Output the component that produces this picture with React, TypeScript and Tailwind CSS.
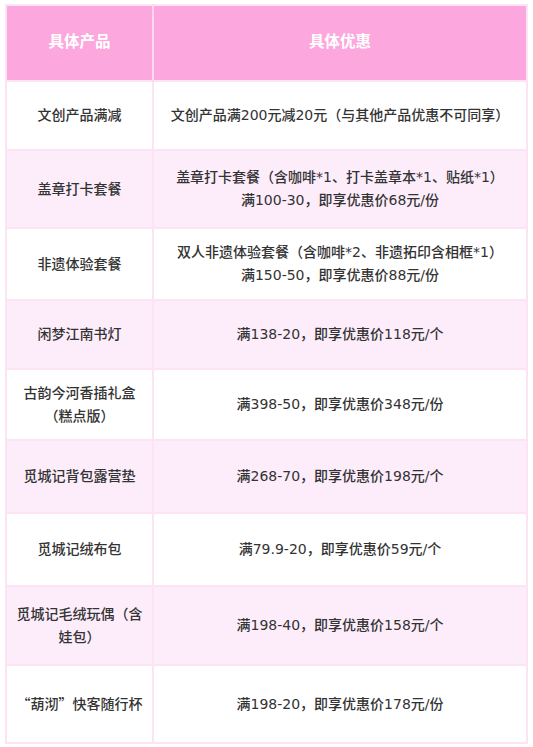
import type { ReactNode } from 'react';

const cjk = "font-['Noto_Sans_CJK_SC',sans-serif]";

const rows: { name: ReactNode[]; deal: string[]; h: string }[] = [
  { name: ['文创产品满减'], deal: ['文创产品满200元减20元（与其他产品优惠不可同享）'], h: 'h-[69px]' },
  { name: ['盖章打卡套餐'], deal: ['盖章打卡套餐（含咖啡*1、打卡盖章本*1、贴纸*1）', '满100-30，即享优惠价68元/份'], h: 'h-[78px]' },
  { name: ['非遗体验套餐'], deal: ['双人非遗体验套餐（含咖啡*2、非遗拓印含相框*1）', '满150-50，即享优惠价88元/份'], h: 'h-[72px]' },
  { name: ['闲梦江南书灯'], deal: ['满138-20，即享优惠价118元/个'], h: 'h-[69px]' },
  { name: ['古韵今河香插礼盒', '（糕点版）'], deal: ['满398-50，即享优惠价348元/份'], h: 'h-[71px]' },
  { name: ['觅城记背包露营垫'], deal: ['满268-70，即享优惠价198元/个'], h: 'h-[73px]' },
  { name: ['觅城记绒布包'], deal: ['满79.9-20，即享优惠价59元/个'], h: 'h-[73px]' },
  { name: ['觅城记毛绒玩偶（含', '娃包）'], deal: ['满198-40，即享优惠价158元/个'], h: 'h-[79px]' },
  {
    name: [
      <span className={cjk}>“葫沏”快客随行杯</span>,
    ],
    deal: ['满198-20，即享优惠价178元/份'],
    h: 'h-[78px]',
  },
];

export default function App() {
  return (
    <div className="min-h-screen bg-white pt-[4px] px-[5px] font-['DejaVu_Sans','Noto_Sans_CJK_SC',sans-serif]">
      <table className="w-[523px] border-collapse border-2 border-[#fde4f5] text-center">
        <thead>
          <tr className="h-[76px] bg-[#fca7dd] text-white text-[15.5px] font-bold">
            <th className="w-[147px] border-r-2 border-[#fdd6ef]">具体产品</th>
            <th>具体优惠</th>
          </tr>
        </thead>
        <tbody className="text-[14px] font-medium leading-[23px] text-[#333333]">
          {rows.map((r, i) => (
            <tr key={i} className={`${r.h} ${i % 2 === 1 ? 'bg-[#fdedfb]' : 'bg-white'}`}>
              <td className="border-2 border-[#fde4f5] px-[6px]">
                {r.name.map((t, j) => (
                  <div key={j}>{t}</div>
                ))}
              </td>
              <td className="border-2 border-[#fde4f5] px-[6px]">
                {r.deal.map((t, j) => (
                  <div key={j}>{t}</div>
                ))}
              </td>
            </tr>
          ))}
        </tbody>
      </table>
    </div>
  );
}
